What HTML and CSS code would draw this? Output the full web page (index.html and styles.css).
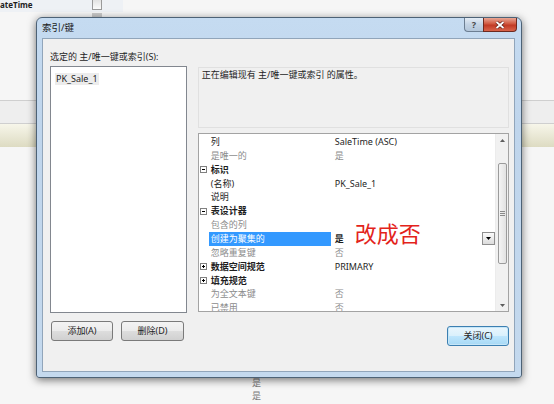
FILE: index.html
```html
<!DOCTYPE html>
<html lang="zh-CN">
<head>
    <meta charset="UTF-8">
    <title>索引/键</title>
    <link rel="stylesheet" href="styles.css">
</head>
<body>
    <!-- Table designer behind the dialog -->
    <div class="desktop">
        <div class="bg-top">
            <span class="bg-col">ateTime</span>
            <span class="bg-check"></span>
        </div>
        <div class="bg-chip"></div>
        <div class="bg-band"></div>
        <div class="bg-yellow"></div>
        <div class="bg-yes first">是</div>
        <div class="bg-yes">是</div>
    </div>

    <!-- Indexes/Keys dialog -->
    <div class="dialog">
        <div class="titlebar">
            <span class="title">索引/键</span>
            <div class="caption">
                <span class="cap-help">?</span>
                <span class="cap-close">
                    <svg width="10" height="8" viewBox="0 0 10 8"><path d="M1.5 1L8.5 7M8.5 1L1.5 7" stroke="#5a1a12" stroke-width="3.2"/><path d="M1.5 1L8.5 7M8.5 1L1.5 7" stroke="#fff" stroke-width="1.8"/></svg>
                </span>
            </div>
        </div>

        <div class="client">
            <div class="label">选定的 主/唯一键或索引(S):</div>
            <div class="main">
                <div class="left-col">
                    <div class="listbox">
                        <span class="list-item">PK_Sale_1</span>
                    </div>
                    <div class="btn-row">
                        <button class="btn">添加(A)</button>
                        <button class="btn wide">删除(D)</button>
                    </div>
                </div>

                <div class="right-col">
                    <div class="desc">正在编辑现有 主/唯一键或索引 的属性。</div>
                    <div class="propgrid">
                        <div class="rows">
                            <div class="row"><span class="mark"></span><span class="name">列</span><span class="val">SaleTime (ASC)</span></div>
                            <div class="row dim"><span class="mark"></span><span class="name">是唯一的</span><span class="val">是</span></div>
                            <div class="row cat"><span class="mark"><svg width="7" height="7" viewBox="0 0 7 7"><rect x="0.5" y="0.5" width="6" height="6" fill="#fff" stroke="#808080"/><path d="M2 3.5h3" stroke="#000"/></svg></span><span class="name">标识</span><span class="val"></span></div>
                            <div class="row"><span class="mark"></span><span class="name">(名称)</span><span class="val">PK_Sale_1</span></div>
                            <div class="row"><span class="mark"></span><span class="name">说明</span><span class="val"></span></div>
                            <div class="row cat"><span class="mark"><svg width="7" height="7" viewBox="0 0 7 7"><rect x="0.5" y="0.5" width="6" height="6" fill="#fff" stroke="#808080"/><path d="M2 3.5h3" stroke="#000"/></svg></span><span class="name">表设计器</span><span class="val"></span></div>
                            <div class="row dim"><span class="mark"></span><span class="name">包含的列</span><span class="val"></span></div>
                            <div class="row picked"><span class="mark"></span><span class="name">创建为聚集的</span><span class="val"><b>是</b><span class="combo"><svg width="5" height="3" viewBox="0 0 5 3"><path d="M0 0h5L2.5 3z" fill="#000"/></svg></span></span></div>
                            <div class="row dim"><span class="mark"></span><span class="name">忽略重复键</span><span class="val">否</span></div>
                            <div class="row cat"><span class="mark"><svg width="7" height="7" viewBox="0 0 7 7"><rect x="0.5" y="0.5" width="6" height="6" fill="#fff" stroke="#808080"/><path d="M2 3.5h3M3.5 2v3" stroke="#000"/></svg></span><span class="name">数据空间规范</span><span class="val plain">PRIMARY</span></div>
                            <div class="row cat"><span class="mark"><svg width="7" height="7" viewBox="0 0 7 7"><rect x="0.5" y="0.5" width="6" height="6" fill="#fff" stroke="#808080"/><path d="M2 3.5h3M3.5 2v3" stroke="#000"/></svg></span><span class="name">填充规范</span><span class="val"></span></div>
                            <div class="row dim"><span class="mark"></span><span class="name">为全文本键</span><span class="val">否</span></div>
                            <div class="row dim"><span class="mark"></span><span class="name">已禁用</span><span class="val">否</span></div>
                        </div>
                        <div class="vscroll">
                            <span class="arrow"><svg width="5" height="3" viewBox="0 0 5 3"><path d="M2.5 0L5 3H0z" fill="#5e5e5e"/></svg></span>
                            <span class="thumb"><i></i><i></i><i></i></span>
                            <span class="track"></span>
                            <span class="arrow"><svg width="5" height="3" viewBox="0 0 5 3"><path d="M0 0h5L2.5 3z" fill="#5e5e5e"/></svg></span>
                        </div>
                        <span class="note">改成否</span>
                    </div>
                    <button class="btn close">关闭(C)</button>
                </div>
            </div>
        </div>
    </div>
</body>
</html>
```

FILE: styles.css
```css
/* General */
body {
    margin: 0;
    width: 554px;
    height: 404px;
    overflow: hidden;
    position: relative;
    background: #f6f6f6;
    font-family: "Noto Sans", "Noto Sans CJK SC", sans-serif;
    font-size: 9px;
    color: #1e1e1e;
}

/* Background designer */
.desktop {
    display: flex;
    flex-direction: column;
}

.bg-top {
    display: flex;
    align-items: flex-start;
    width: 123px;
    height: 12px;
    background: #eef1f5;
}

.bg-col {
    font-size: 8px;
    font-weight: bold;
    line-height: 10px;
    width: 92px;
}

.bg-check {
    width: 8px;
    height: 9px;
    border: 1px solid #9a9a9a;
    border-top: none;
    background: linear-gradient(#e2e2e2, #fbfbfb);
}

.bg-chip {
    width: 10px;
    height: 4px;
    margin: 1px 0 0 92px;
    background: #c9c9c9;
}

.bg-band {
    margin-top: 83px;
    height: 22px;
    border-top: 1px solid #cfcfcf;
    border-bottom: 1px solid #cfcfcf;
    background: #eeeeee;
}

.bg-yellow {
    height: 23px;
    background: linear-gradient(#f7f6ea, #dddbc2);
}

.bg-yes {
    margin-left: 252px;
    height: 13px;
    line-height: 13px;
    color: #7a7a7a;
}

.bg-yes.first {
    margin-top: 229px;
}

/* Dialog frame */
.dialog {
    position: absolute;
    left: 36px;
    top: 17px;
    width: 486px;
    height: 361px;
    box-sizing: border-box;
    border: 1px solid #4d6276;
    border-radius: 6px 6px 3px 3px;
    padding: 0 6px 5px 5px;
    background: linear-gradient(#c5dbf1, #bfd5ec 30%, #c4d9ee);
    box-shadow: 0 2px 9px rgba(0, 0, 0, 0.55);
    display: flex;
    flex-direction: column;
}

.titlebar {
    display: flex;
    height: 20px;
    align-items: center;
}

.title {
    font-size: 9.5px;
    line-height: 12px;
    color: #1a1a1a;
}

.caption {
    display: flex;
    align-self: flex-start;
    margin-left: auto;
    margin-right: -2px;
}

.cap-help {
    width: 19px;
    height: 14px;
    box-sizing: border-box;
    border: 1px solid #6c7e92;
    border-top: none;
    border-right: none;
    border-radius: 0 0 0 4px;
    background: linear-gradient(#e4ecf5, #c3d3e4 50%, #b3c6da);
    color: #4a4a4a;
    font-size: 9px;
    font-weight: bold;
    line-height: 13px;
    text-align: center;
}

.cap-close {
    width: 34px;
    height: 14px;
    box-sizing: border-box;
    border: 1px solid #6d2a20;
    border-top: none;
    border-radius: 0 0 4px 0;
    background: linear-gradient(#e9a795, #d0573f 45%, #c13a25 55%, #d9644b);
    display: flex;
    align-items: center;
    justify-content: center;
}

/* Client area */
.client {
    flex: 1;
    box-sizing: border-box;
    border: 1px solid #91a5ba;
    background: #f0f0f0;
    padding: 12px 5px 0 7px;
}

.label {
    line-height: 12px;
}

.main {
    display: flex;
    gap: 11px;
    margin-top: 3px;
}

.left-col {
    width: 137px;
    display: flex;
    flex-direction: column;
}

.listbox {
    height: 247px;
    box-sizing: border-box;
    border: 1px solid #82878f;
    background: #fff;
    padding: 5px 0 0 4px;
}

.list-item {
    display: inline-block;
    padding: 0 1px;
    line-height: 12px;
    background: #ececec;
}

.btn-row {
    display: flex;
    gap: 8px;
    margin: 8px 0 0 1px;
}

.btn {
    width: 62px;
    height: 20px;
    padding: 0;
    box-sizing: border-box;
    border: 1px solid #7a7a7a;
    border-radius: 3px;
    background: linear-gradient(#f3f3f3, #ebebeb 50%, #dddddd 51%, #d0d0d0);
    font-family: inherit;
    font-size: 9px;
    color: #1e1e1e;
    line-height: 18px;
}

.btn.wide {
    width: 63px;
}

.right-col {
    width: 312px;
    display: flex;
    flex-direction: column;
}

.desc {
    margin-top: 1px;
    height: 61px;
    box-sizing: border-box;
    border: 1px solid #e0e0e0;
    padding: 1px 3px;
    line-height: 12px;
}

/* Property grid */
.propgrid {
    position: relative;
    margin-top: 5px;
    height: 179px;
    box-sizing: border-box;
    border: 1px solid #a3a3a3;
    background: #fff;
    display: flex;
}

.rows {
    flex: 1;
    padding-top: 1px;
    overflow: hidden;
}

.row {
    display: grid;
    grid-template-columns: 10px 122px 1fr;
    height: 13.86px;
    line-height: 13.86px;
}

.mark {
    display: flex;
    align-items: center;
    padding-left: 1px;
}

.name {
    padding-left: 2px;
    white-space: nowrap;
}

.val {
    display: flex;
    padding-left: 4px;
}

.row.dim .name,
.row.dim .val {
    color: #8c8c8c;
}

.row.cat .name {
    font-weight: bold;
}

.row.picked .name {
    background: #3399ff;
    color: #fff;
}

.combo {
    margin-left: auto;
    width: 13px;
    height: 13px;
    box-sizing: border-box;
    border: 1px solid #8e8e8e;
    background: linear-gradient(#fafafa, #dcdcdc);
    display: flex;
    align-items: center;
    justify-content: center;
}

.vscroll {
    width: 12px;
    display: flex;
    flex-direction: column;
    align-items: center;
    background: #f1f1f1;
    border-left: 1px solid #ececec;
}

.arrow {
    height: 12px;
    display: flex;
    align-items: center;
}

.thumb {
    margin-top: 17px;
    width: 9px;
    height: 101px;
    box-sizing: border-box;
    border: 1px solid #9b9b9b;
    border-radius: 2px;
    background: linear-gradient(to right, #f4f4f4, #e2e2e2);
    display: flex;
    flex-direction: column;
    justify-content: center;
    align-items: center;
    gap: 1px;
}

.thumb i {
    width: 5px;
    height: 1px;
    background: #8a8a8a;
}

.track {
    flex: 1;
}

.note {
    position: absolute;
    left: 156px;
    top: 87px;
    font-family: "Noto Sans CJK SC", sans-serif;
    font-size: 22px;
    line-height: 22px;
    color: #e3231b;
}

.btn.close {
    align-self: flex-end;
    margin-top: 14px;
    border-color: #3c7fb1;
    background: linear-gradient(#eaf6fd, #d9f0fc 50%, #bee6fd 51%, #a7d9f5);
    box-shadow: inset 0 0 0 1px #c5e6f8;
}
```
